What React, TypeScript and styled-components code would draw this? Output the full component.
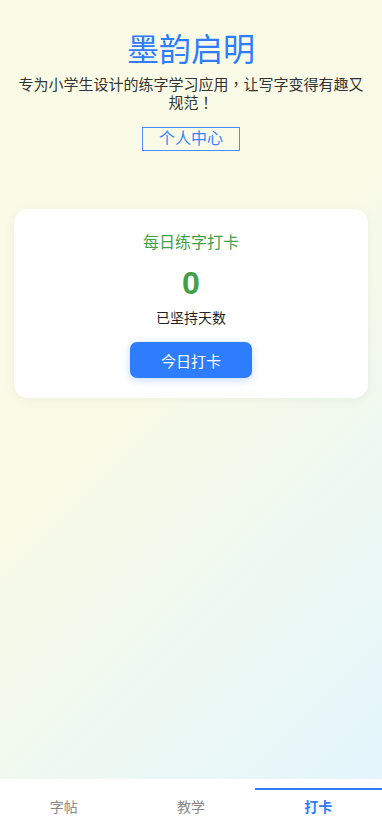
import React, { useState } from "react";
import styled, { createGlobalStyle } from "styled-components";

const GlobalStyle = createGlobalStyle`
  html, body {
    margin: 0;
    padding: 0;
  }
  body {
    font-family: "Liberation Sans", "Noto Sans CJK TC", sans-serif;
  }
  * { box-sizing: border-box; }
`;

const Page = styled.div`
  display: flex;
  flex-direction: column;
  height: 100vh;
  background: linear-gradient(135deg, #f9fbe7 0%, #f9fbe7 45%, #e1f5fe 100%);
`;

const Content = styled.main`
  flex: 1;
  display: flex;
  flex-direction: column;
  align-items: center;
  padding: 31px 16px 0;
`;

const Title = styled.h1`
  margin: 0;
  font-size: 32px;
  line-height: 38px;
  font-weight: normal;
  color: #2f7cff;
`;

const Subtitle = styled.p`
  margin: 7px 0 0;
  font-size: 15px;
  line-height: 18px;
  color: #333;
  text-align: center;
`;

const OutlineButton = styled.button`
  margin-top: 15px;
  padding: 0 16px;
  height: 24px;
  border: 1px solid #4a8cff;
  background: transparent;
  color: #3a82ff;
  font-family: inherit;
  font-size: 16px;
  line-height: 22px;
  cursor: pointer;
`;

const Card = styled.section`
  margin-top: 58px;
  width: calc(100% + 4px);
  background: #fff;
  border-radius: 14px;
  box-shadow: 0 2px 12px rgba(0, 0, 0, 0.05);
  padding: 24px 0 20px;
  display: flex;
  flex-direction: column;
  align-items: center;
`;

const CardTitle = styled.h2`
  margin: 0;
  font-size: 16px;
  line-height: 19px;
  font-weight: normal;
  color: #43a047;
`;

const Count = styled.div`
  margin-top: 12px;
  font-size: 32px;
  line-height: 38px;
  font-weight: bold;
  color: #43a047;
`;

const CountLabel = styled.div`
  margin-top: 8px;
  font-size: 14px;
  line-height: 17px;
  color: #222;
`;

const PrimaryButton = styled.button`
  margin-top: 15px;
  width: 122px;
  height: 36px;
  border: none;
  border-radius: 7px;
  background: #2f7dff;
  color: #fff;
  font-family: inherit;
  font-size: 15px;
  box-shadow: 0 2px 8px rgba(47, 125, 255, 0.28);
  cursor: pointer;
`;

const Nav = styled.nav`
  height: 48px;
  background: #fff;
  display: grid;
  grid-template-columns: repeat(3, 1fr);
  padding-top: 9px;
`;

const Tab = styled.div<{ $active?: boolean }>`
  border-top: 2px solid ${(p) => (p.$active ? "#2f7dff" : "transparent")};
  padding-top: 7px;
  text-align: center;
  font-size: 14px;
  line-height: 20px;
  color: ${(p) => (p.$active ? "#2f7dff" : "#888")};
  font-weight: ${(p) => (p.$active ? "bold" : "normal")};
`;

export default function App() {
  const [days] = useState(0);
  const tabs = ["字帖", "教学", "打卡"];
  return (
    <>
      <GlobalStyle />
      <Page>
        <Content>
          <Title>墨韵启明</Title>
          <Subtitle>专为小学生设计的练字学习应用，让写字变得有趣又规范！</Subtitle>
          <OutlineButton>个人中心</OutlineButton>
          <Card>
            <CardTitle>每日练字打卡</CardTitle>
            <Count>{days}</Count>
            <CountLabel>已坚持天数</CountLabel>
            <PrimaryButton>今日打卡</PrimaryButton>
          </Card>
        </Content>
        <Nav>
          {tabs.map((t, i) => (
            <Tab key={t} $active={i === 2}>
              {t}
            </Tab>
          ))}
        </Nav>
      </Page>
    </>
  );
}
